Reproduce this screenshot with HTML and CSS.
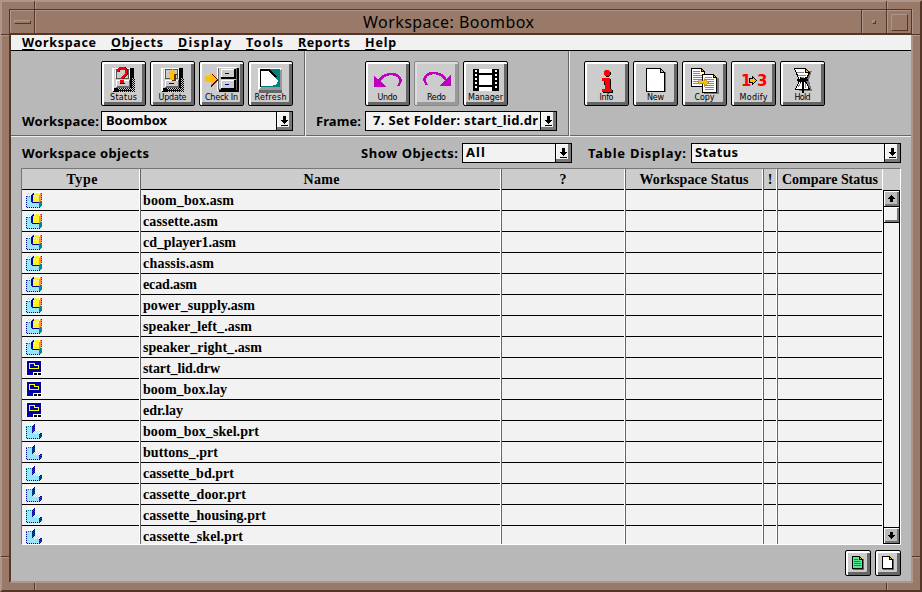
FILE: index.html
```html
<!DOCTYPE html>
<html lang="en">
<head>
<meta charset="utf-8">
<title>Workspace: Boombox</title>
<link rel="stylesheet" href="styles.css">
</head>
<body>
<svg class="defs" width="0" height="0">
  <defs>
    <pattern id="dither" width="2" height="2" patternUnits="userSpaceOnUse"><rect width="1" height="1" fill="#000"/><rect x="1" y="1" width="1" height="1" fill="#000"/></pattern>
  </defs>
  <symbol id="asm" viewBox="0 0 16 16">
    <path fill="#fff" d="M1 1h7v3H0V2h1z"/>
    <path stroke="#99e5ff" stroke-dasharray="1 1" d="M2 1.500h5M1 2.500h5"/>
    <path fill="#99e5ff" d="M0 4h6v7h8v5H0z"/>
    <path fill="#00009c" d="M5 3h1V2h1V1h1v9h5v1H6v-1H5z"/>
    <path fill="#0050a0" d="M6 9h7v1H6z"/>
    <path fill="#fff" d="M9 0h7v2H8V1h1z"/>
    <path fill="#fff020" d="M7 3h1V2h1V1h4v2h1v6h-1v1H7z"/>
    <path stroke="#fffbb0" stroke-dasharray="1 1" d="M8 4.500h5M7 6.500h5"/>
    <path fill="#ff8c50" d="M13 3h1V1h2v6h-1v2h-1v1h-1z"/>
    <path stroke="#c00000" stroke-dasharray="1 1" d="M15.500 1v7"/>
    <path fill="#008890" d="M13 10h1V9h2v5h-1v1h-1v1h-1z"/>
    <path fill="none" stroke="#00009c" stroke-dasharray="1 1" d="M.5 4v11.500H14"/>
    <path stroke="#008890" stroke-dasharray="1 1" d="M1 4.500h4"/>
  </symbol>
  <symbol id="drw" viewBox="0 0 16 16">
    <path fill="#fff" d="M0 0h16v16H0z"/><path fill="#0000a0" d="M1 1h14v11H7v3H1z"/>
    <path fill="none" stroke="#ff0" d="M3.500 3.500h5v2h4v3h-9z"/>
    <path fill="#000" d="M8 13h3v2H8zM12 13h3v2h-3z"/>
  </symbol>
  <symbol id="prt" viewBox="0 0 16 16">
    <path fill="#fff" d="M2 0h6v2H6v1H0V2h2z"/>
    <path fill="#99e5ff" d="M0 3h6v7h7v6H0z"/>
    <path fill="#0050a0" d="M6 3h1V2h1V1h1v7H8v1H7v1H6z"/>
    <path stroke="#00009c" stroke-dasharray="1 1" d="M6.500 3v7M7.500 2v7M8.500 1v7"/>
    <path fill="#fff" d="M9 8h6v1h-1v1h-1v1H7v-1h1V9h1z"/>
    <path stroke="#99e5ff" stroke-dasharray="1 1" d="M9 8.500h5M8 9.500h6M7 10.500h6"/>
    <path fill="#006898" d="M13 11h1v-1h2v4h-1v1h-1v1h-1z"/>
    <path stroke="#00009c" stroke-dasharray="1 1" d="M13.500 11v5M14.500 10v5M15.500 10v4"/>
    <path stroke="#008890" stroke-dasharray="1 1" d="M0 3.500h6"/>
    <path fill="none" stroke="#00009c" stroke-dasharray="1 1" d="M.5 4v11.500H13"/>
  </symbol>
  <symbol id="cabinet" viewBox="0 0 43 31">
    <path fill="#000" d="M11 5h21v24H11z"/><path fill="#ccc" d="M29 15h3v14H16v-4h13z"/><path fill="url(#dither)" d="M29 15h4v14H14v-4h15z"/>
    <path fill="#fff" d="M10 5h19v1H12v22h-2z"/><path fill="#ccc" d="M12 6h17v19H12z"/><path fill="#000" d="M28 5h2v20H14v-1h14zM12 27h18v1H12z"/>
    <path fill="none" stroke="#555" d="M14.500 6.500h12v9h-12z"/><path fill="#fff" d="M13 7h1v8h-1zM27 7h1v8h-1z"/>
    <path fill="#666" d="M14 17h14v8H14z"/><path fill="#fff" d="M14 17h13v1H15v6h-1z"/><path fill="#ccc" d="M15 18h12v5H15z"/><path fill="#0000b0" d="M18 20h5v1h-5z"/>
  </symbol>
  <symbol id="page" viewBox="0 0 20 24">
    <path fill="#777" d="M17 4h4v20H3v-1h14z"/><path fill="#fff" stroke="#000" d="M.5.500h14l4 4v19H.5z"/><path fill="#ffc000" stroke="#000" d="M14.500.500v4h4z"/>
  </symbol>
  <symbol id="down" viewBox="0 0 9 11"><path fill="#000" d="M3 0h3v4h2v1H7v1H6v1H5v1H4V7H3V6H2V5H1V4h2zM1 9h7v1H1z"/></symbol>
</svg>
<div class="window">
  <i class="notch v tl"></i><i class="notch v tr"></i><i class="notch v bl"></i><i class="notch v br"></i>
  <i class="notch h lt"></i><i class="notch h rt"></i><i class="notch h lb"></i><i class="notch h rb"></i>
  <header class="titlebar">
    <div class="tb-menu"><i></i></div>
    <h1><span data-w="171">Workspace: Boombox</span></h1>
    <div class="tb-min"><i></i></div>
    <div class="tb-max"><i></i></div>
  </header>
  <main class="client">
    <nav class="menubar">
      <span data-w="74"><u>W</u>orkspace</span><span data-w="52"><u>O</u>bjects</span><span data-w="53"><u>D</u>isplay</span><span data-w="37"><u>T</u>ools</span><span data-w="52"><u>R</u>eports</span><span data-w="31"><u>H</u>elp</span>
    </nav>
    <section class="toolbar">
      <div class="group g1">
        <div class="buttons">
          <button><svg viewBox="0 0 43 31"><use href="#cabinet" width="43" height="31"/><path fill="none" stroke="#600" stroke-width="2" d="M17 9V7l2-2h4l2 2v4l-4 4v1"/><path fill="none" stroke="#f00010" stroke-width="2.200" d="M16 9V7l2-2h4l2 2v4l-4 4v1"/><path fill="#f00010" d="M18 17h4v3h-4z"/></svg><span data-w="27">Status</span></button>
          <button><svg viewBox="0 0 43 31"><use href="#cabinet" width="43" height="31"/><path fill="#630" d="M23 8l4 4h-2v6h-4z"/><path fill="#ffc000" d="M21 6l5 5h-3v6h-4v-6h-3z"/></svg><span data-w="28">Update</span></button>
          <button><svg viewBox="0 0 43 31"><path fill="#000" d="M19 5h20v24H19z"/><path fill="#ccc" stroke="#666" d="M18.500 4.500h18v22h-18z"/><path fill="#fff" d="M17 4h20v1H18v23h-1z"/>
            <path fill="#000" d="M21 6h15v10H21zM21 17h15v10H21z"/><path fill="#fff" d="M21 6h13v8H21zM21 17h13v8H21z"/><path fill="#ccc" d="M22 7h12v7H22zM22 18h12v7H22z"/><path fill="#0000b0" d="M25 10h4v1h-4zM25 21h4v1h-4z"/><path fill="#600" d="M12 10l6 7-7 7z"/><path fill="#ffc000" d="M5 13h5v-3l7 6-6 7v-4H5z"/></svg><span data-w="33">Check In</span></button>
          <button><svg viewBox="0 0 43 31"><path fill="#666" d="M10 27h23v3H10z"/><path fill="#fff" d="M9 5h24v22H9z"/><path fill="#999" d="M33 5v22H9l3-3h18V8z"/><path fill="#008080" d="M11 6h20v18H11z"/><path fill="#fff" d="M11 7h9l9 11-1 3-5 2H12z"/><path fill="#000" d="M11 6h10l7 8h-3l-6-6h-7v16h-1z"/></svg><span data-w="32">Refresh</span></button>
        </div>
        <div class="field"><label><span data-w="77">Workspace:</span></label><div class="combo w1"><b><span data-w="61">Boombox</span></b><i><svg><use href="#down"/></svg></i></div></div>
      </div>
      <div class="group g2">
        <div class="buttons">
          <button><svg viewBox="0 0 43 31"><path fill="#c000c0" d="M8 13l4 3 8 8H8z"/><path fill="none" stroke="#c000c0" stroke-width="2.500" d="M13 18c5-8 15-9 20-4 3 4 1 6-1 9"/></svg><span data-w="20">Undo</span></button>
          <button class="off"><svg viewBox="0 0 43 31"><path fill="#c000c0" d="M36 12l-4 3-7 8h11z"/><path fill="none" stroke="#c000c0" stroke-width="2.500" d="M31 17c-5-8-15-9-20-4-3 4-1 6 1 9"/></svg><span data-w="19">Redo</span></button>
          <button><svg viewBox="0 0 43 31"><path fill="#000" d="M9 6h26v22H9z"/><path fill="#fff" d="M15 6h13v4H15zM15 12h13v10H15zM15 24h13v4H15z"/><path fill="none" stroke="#fff" stroke-width="2" stroke-dasharray="2 2" d="M12 7v20M32 7v20"/></svg><span data-w="35">Manager</span></button>
        </div>
        <div class="field"><label><span data-w="45">Frame:</span></label><div class="combo w2"><b><span data-w="165">7. Set Folder: start_lid.dr</span></b><i><svg><use href="#down"/></svg></i></div></div>
      </div>
      <div class="group g3">
        <div class="buttons">
          <button><svg viewBox="0 0 43 31"><path fill="#000" d="M19 16h7v11h2v3H18v-2h2z"/><circle cx="22.500" cy="10.500" r="3.200"/><circle cx="22" cy="10" r="3.200" fill="#f00"/><path fill="#f00" d="M17 15h8v11h2v3H17v-3h3v-8h-3z"/></svg><span data-w="14">Info</span></button>
          <button><svg viewBox="0 0 43 31"><use href="#page" x="12" y="5" width="20" height="24"/></svg><span data-w="17">New</span></button>
          <button><svg viewBox="0 0 43 31"><path fill="#fff" stroke="#000" d="M8.500 5.500h10l3 3v15h-13z"/><path fill="#ffc000" stroke="#000" d="M18.500 5.500v3h3z"/><path stroke="#888" d="M10 8.500h7M10 10.500h7M10 12.500h9M10 14.500h9M10 16.500h9M10 18.500h9M10 20.500h9"/><path fill="#777" d="M34 15h2v16H21v-2h13z"/><path fill="#fff" stroke="#000" d="M19.500 11.500h11l3 3v15h-14z"/><path fill="#ffc000" stroke="#000" d="M30.500 11.500v3h3z"/><path stroke="#888" d="M22 14.500h7M22 16.500h9M22 18.500h9M22 20.500h9M22 22.500h9M22 24.500h9M22 26.500h9"/><path fill="#ffc000" stroke="#864" stroke-width=".5" d="M15 17.500h6v-2l5 4-5 4v-3h-6z"/></svg><span data-w="20">Copy</span></button>
          <button><svg viewBox="0 0 43 31"><text x="9" y="23" class="digit">1</text><text x="25" y="23" class="digit">3</text><path fill="#ffc000" stroke="#000" d="M17.500 15.500h3v-2l4 4-4 4v-2h-3z"/></svg><span data-w="28">Modify</span></button>
          <button><svg viewBox="0 0 43 31"><path fill="#777" d="M18 8h13l-3 9 3 11H18z"/><path fill="#fff" stroke="#000" d="M13.500 5.500h11l4 4-4 8 4 9h-14l4-9z"/><path fill="#ffc000" stroke="#000" d="M24.500 5.500v4h4z"/><path stroke="#888" fill="none" d="M16 9l7 1M17 12h8M19 14l4 1M20 20l-3 4M24 20l1 5"/><path stroke="#000" stroke-width="2" fill="none" d="M16 17h11M19 15l6 4M25 15l-6 4M22 18v12"/></svg><span data-w="16">Hold</span></button>
        </div>
      </div>
    </section>
    <section class="filters">
      <label class="f1"><span data-w="127">Workspace objects</span></label>
      <label class="f2"><span data-w="97">Show Objects:</span></label><div class="combo w3"><b><span data-w="19">All</span></b><i><svg><use href="#down"/></svg></i></div>
      <label class="f3"><span data-w="98">Table Display:</span></label><div class="combo w4"><b><span data-w="43">Status</span></b><i><svg><use href="#down"/></svg></i></div>
    </section>
    <section class="table">
      <div class="row head">
        <div><p><span data-w="31">Type</span></p></div><div><p><span data-w="36">Name</span></p></div><div><p>?</p></div><div><p><span data-w="109">Workspace Status</span></p></div><div><p>!</p></div><div><p><span data-w="96">Compare Status</span></p></div><div class="corner"></div>
      </div>
      <div class="body">
        <div class="rows" id="rows"></div>
        <div class="scroll">
          <div class="sb"><svg viewBox="0 0 9 9"><path d="M4 1h1v1h1v1h1v1h1v1H6v3H3V5H1V4h1V3h1V2h1z"/></svg></div>
          <div class="thumb"></div><div class="track"></div>
          <div class="sb last"><svg viewBox="0 0 9 9"><path d="M3 1h3v3h2v1H7v1H6v1H5v1H4V7H3V6H2V5H1V4h2z"/></svg></div>
        </div>
      </div>
    </section>
    <footer>
      <button><svg viewBox="0 0 14 16"><path fill="#666" d="M10 4h3v11H2v-2h8z"/><path fill="#50e890" stroke="#000" d="M1.500 1.500h7l3 3v9h-10z"/><path fill="#ffc000" stroke="#000" d="M8.500 1.500v3h3z"/><path stroke="#387850" d="M3 4.500h4M3 6.500h6M3 8.500h7M3 10.500h7"/></svg></button>
      <button><svg viewBox="0 0 14 16"><path fill="#666" d="M10 4h3v11H2v-2h8z"/><path fill="#fff" stroke="#000" d="M1.500 1.500h7l3 3v9h-10z"/><path fill="#ffc000" stroke="#000" d="M8.500 1.500v3h3z"/></svg></button>
    </footer>
  </main>
</div>
<script src="app.js"></script>
</body>
</html>
```
FILE: app.js
```js
const objects = [
  ['boom_box.asm', 91], ['cassette.asm', 75], ['cd_player1.asm', 93], ['chassis.asm', 71],
  ['ecad.asm', 54], ['power_supply.asm', 112], ['speaker_left_.asm', 109], ['speaker_right_.asm', 119],
  ['start_lid.drw', 77], ['boom_box.lay', 84], ['edr.lay', 40], ['boom_box_skel.prt', 116],
  ['buttons_.prt', 75], ['cassette_bd.prt', 91], ['cassette_door.prt', 103],
  ['cassette_housing.prt', 123], ['cassette_skel.prt', 100]
];
const icons = { asm: 'asm', drw: 'drw', lay: 'drw', prt: 'prt' };
document.getElementById('rows').innerHTML = objects.map(([name, w]) =>
  `<div class="row"><div><p><svg class="type" viewBox="0 0 16 16"><use href="#${icons[name.slice(-3)]}"/></svg></p></div>` +
  `<div><p><span data-w="${w}">${name}</span></p></div>` + '<div><p></p></div>'.repeat(4) + '</div>').join('');

document.querySelectorAll('[data-w]').forEach(el => {
  const gap = (el.dataset.w - el.getBoundingClientRect().width) / (el.textContent.length - 1);
  el.style.letterSpacing = gap + 'px';
  el.style.marginRight = -gap + 'px';
});
```
FILE: styles.css
```css
* { box-sizing: border-box; margin: 0; padding: 0; }
:root { --brown: #997968; --light: #ae968a; --dark: #54352a; --face: #ccc; --field: #f2f2f2; }
body { width: 922px; height: 592px; overflow: hidden; background: var(--brown); color: #000; }
.defs { position: absolute; }
[data-w] { display: inline-block; white-space: pre; }
svg { display: block; shape-rendering: crispEdges; }
.window { position: relative; width: 922px; height: 592px; background: var(--brown);
  border-style: solid; border-width: 2px; border-color: var(--light) var(--dark) var(--dark) var(--light); padding: 7px; }
.notch { position: absolute; }
.v { width: 2px; height: 8px; border-left: 1px solid var(--dark); border-right: 1px solid var(--light); }
.h { height: 2px; width: 8px; border-top: 1px solid var(--dark); border-bottom: 1px solid var(--light); }
.tl, .bl { left: 32px; } .tr, .br { left: 884px; }
.tl, .tr { top: -1px; } .bl, .br { bottom: 0; height: 7px; }
.lt, .lb { left: -1px; } .rt, .rb { right: 0; }
.lt, .rt { top: 32px; } .lb, .rb { top: 554px; }
.titlebar { display: flex; height: 26px; width: 903px; border: solid var(--dark); border-width: 1px 1px 2px 1px;
  box-shadow: inset 1px 1px var(--light), 1px 0 var(--light); }
.titlebar h1 { flex: 1; padding: 1px 0 0 1px; text-align: center; font: 16px/23px "Noto Sans", sans-serif; }
.tb-menu { width: 25px; border-right: 1px solid var(--dark); box-shadow: 1px 0 var(--light); padding: 10px 0 0 4px; }
.tb-menu i, .tb-min i, .tb-max i { display: block; border: 1px solid; border-color: var(--light) var(--dark) var(--dark) var(--light); }
.tb-menu i { width: 17px; height: 4px; }
.tb-min, .tb-max { width: 25px; border-left: 1px solid var(--dark); box-shadow: inset 1px 0 var(--light); }
.tb-min { padding: 10px 0 0 10px; } .tb-min i { width: 4px; height: 4px; }
.tb-max { padding: 4px 0 0 4px; } .tb-max i { width: 17px; height: 17px; }
.client { width: 904px; height: 548px; background: #b8b8b8; border: solid; border-width: 0 2px 2px 2px;
  border-color: var(--light) var(--light) var(--light) var(--dark); }
.menubar { display: flex; height: 16px; padding-left: 11px; gap: 15px; background: #f1f1f1; border-bottom: 1px solid #000;
  font: bold 12.500px/15px "Noto Sans", sans-serif; }
.menubar u { text-decoration-thickness: 1px; text-underline-offset: 2px; }
.toolbar { display: flex; height: 86px; border-bottom: 1px solid #eee; box-shadow: inset 0 -1px #666; }
.group { padding-top: 10px; border-right: 1px solid #eee; box-shadow: inset -1px 0 #666; }
.g1 { width: 295px; } .g2 { width: 264px; } .g3 { flex: 1; border: 0; box-shadow: none; }
.buttons { display: flex; gap: 4px; }
.g1 .buttons { margin-left: 90px; } .g2 .buttons { margin-left: 59px; } .g3 .buttons { margin-left: 14px; }
button { width: 45px; height: 45px; border: 1px solid #000; border-radius: 2px; background: var(--face); color: #000;
  box-shadow: inset 2px 2px #fff, inset -3px -3px #666; font: 8px/10px "DejaVu Sans", sans-serif; overflow: hidden; }
button > svg { width: 43px; height: 31px; }
button > span { position: relative; top: -1px; margin-top: -3px; }
button.off { border-color: #888; box-shadow: inset 2px 2px #ddd, inset -3px -3px #999; }
.digit { font: bold 15px "DejaVu Sans", sans-serif; fill: #f00; letter-spacing: -1px; }
.field { display: flex; margin-top: 5px; height: 20px; }
label { font: bold 13px/20px "Noto Sans", sans-serif; }
.g1 label { width: 90px; padding-left: 11px; } .g2 label { width: 59px; padding-left: 10px; }
.combo { display: flex; height: 20px; border: 1px solid #000; background: var(--field); }
.combo b { flex: 1; padding-left: 4px; font: bold 13px/17px "Noto Sans", sans-serif; }
.combo i { flex: none; width: 16px; border-left: 1px solid #000; background: var(--field); box-shadow: inset -3px -3px #777, inset 1px 1px #fff; padding: 4px 0 0 3px; }
.combo i svg { width: 9px; height: 11px; }
.w1, .w2 { width: 192px; } .w2 b { padding-left: 7px; } .w3 { width: 110px; } .w4 { width: 210px; }
.filters { display: flex; height: 31px; padding: 6px 0 0 11px; }
.f1 { width: 339px; } .f2 { width: 101px; } .f3 { width: 103px; }
.filters .w3 { margin-right: 16px; } .filters .combo b { padding-left: 3px; }
.table { width: 880px; height: 377px; margin-left: 10px; border: 1px solid #777; border-right-color: #fff; border-bottom-color: #fff; }
.row { display: grid; grid-template-columns: 119px 361px 124px 138px 14px 105px 17px; height: 21px; font: bold 14px/22px "Liberation Serif", serif; }
.row > div { padding-right: 1px; border-right: 1px solid #666; background: #fff; }
.row > div:nth-child(6) { border-right: 0; }
.row p { height: 21px; border-bottom: 1px solid #000; background: var(--field); }
.row:not(.head) div:nth-child(2) p { padding-left: 2px; }
.head p { background: var(--face); text-align: center; }
.head div:first-child p { padding-left: 3px; }
.head div:nth-child(2) p { padding-left: 2px; }
.row > .corner { border: 0; background: var(--face); }
.type { width: 16px; height: 16px; position: relative; left: 4px; top: 2px; }
.body { display: flex; height: 354px; }
.rows { width: 861px; overflow: hidden; }
.scroll { display: flex; flex-direction: column; width: 17px; border: 1px solid #000; height: 354px; background: var(--field); }
.sb { height: 16px; background: #bbb; border-bottom: 1px solid #000; padding: 3px; box-shadow: inset 1px 1px #fff, inset -2px -2px #777; }
.sb svg { width: 9px; height: 9px; }
.thumb { height: 16px; border-bottom: 1px solid #000; box-shadow: inset 1px 1px #fff, inset -2px -2px #777; }
.track { flex: 1; }
.sb.last { border: 0; border-top: 1px solid #000; }
footer { display: flex; justify-content: flex-end; gap: 4px; padding: 5px 10px 0 0; }
footer button { width: 26px; height: 26px; }
footer button svg { width: 14px; height: 16px; margin: 0 auto; }
```
